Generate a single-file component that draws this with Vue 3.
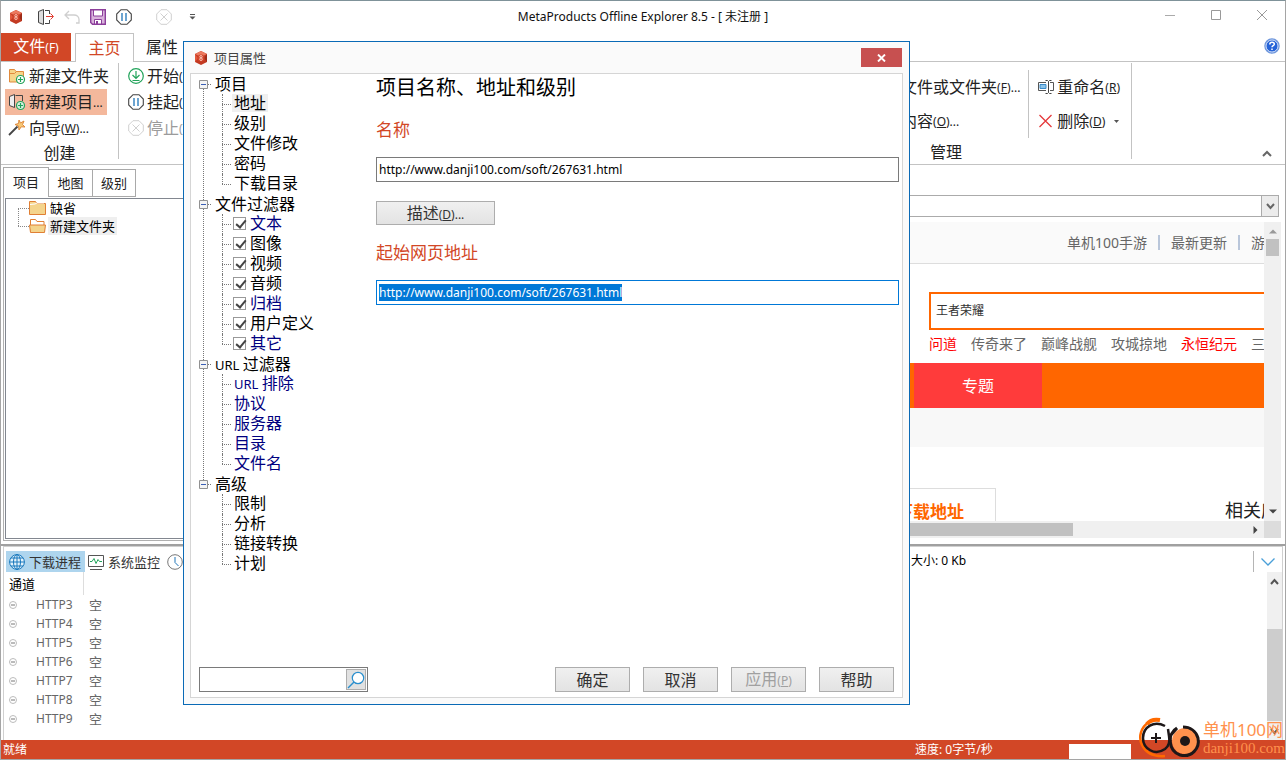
<script setup>
import { ref, onMounted } from 'vue'

const name = ref('http://www.danji100.com/soft/267631.html')
const address = ref('http://www.danji100.com/soft/267631.html')
const search = ref('')
const pageUrl = ref('')
const keyword = ref('王者荣耀')
const addressBox = ref(null)
const channels = ['HTTP3', 'HTTP4', 'HTTP5', 'HTTP6', 'HTTP7', 'HTTP8', 'HTTP9']
const groups = ref([
  {
    label: '项目',
    items: [
      { label: '地址', current: true },
      { label: '级别' },
      { label: '文件修改' },
      { label: '密码' },
      { label: '下载目录' }
    ]
  },
  {
    label: '文件过滤器',
    items: [
      { label: '文本', check: true, on: true, blue: true },
      { label: '图像', check: true, on: true },
      { label: '视频', check: true, on: true },
      { label: '音频', check: true, on: true },
      { label: '归档', check: true, on: true, blue: true },
      { label: '用户定义', check: true, on: true },
      { label: '其它', check: true, on: true, blue: true }
    ]
  },
  {
    prefix: 'URL',
    label: '过滤器',
    items: [
      { prefix: 'URL', label: '排除', blue: true },
      { label: '协议', blue: true },
      { label: '服务器', blue: true },
      { label: '目录', blue: true },
      { label: '文件名', blue: true }
    ]
  },
  {
    label: '高级',
    items: [{ label: '限制' }, { label: '分析' }, { label: '链接转换' }, { label: '计划' }]
  }
])
const hotLinks = [
  { label: '问道', hot: true },
  { label: '传奇来了' },
  { label: '巅峰战舰' },
  { label: '攻城掠地' },
  { label: '永恒纪元', hot: true },
  { label: '三' }
]

onMounted(() => {
  addressBox.value.focus()
  addressBox.value.select()
})
</script>

<template>
  <div class="window">
    <header class="titlebar">
      <div class="quick">
        <svg class="logo" width="14" height="16" viewBox="0 0 14 16">
          <path d="M7 1l6 3v8l-6 3-6-3V4z" fill="#c23a22" />
          <path d="M7 1l6 3-6 3-6-3z" fill="#ec7a5f" />
          <path d="M1 4l3 4-3 4z" fill="#e2583c" />
          <path d="M13 4l-3 4 3 4z" fill="#9c2c18" />
          <circle cx="7" cy="8" r="3.500" fill="#d2452b" />
          <circle cx="7" cy="6.700" r="1.200" fill="none" stroke="#ffd9cc" stroke-width=".8" />
          <circle cx="7" cy="9.200" r="1.300" fill="none" stroke="#ffd9cc" stroke-width=".8" />
        </svg>
        <button class="tool exit" aria-label="退出">
          <svg width="18" height="18" viewBox="0 0 18 18" fill="none">
            <path d="M1.500 3.500l5-2v15l-5-2z" fill="#ddd" stroke="#444" />
            <path d="M8 2.500h4.500V6M8 15.500h4.500V12" stroke="#444" />
            <path d="M9 8.500h7M13.500 5.500l3 3-3 3" stroke="#e03c31" />
          </svg>
        </button>
        <button class="tool undo" aria-label="撤消">
          <svg width="16" height="16" viewBox="0 0 16 16" fill="none" stroke="#cfcfcf" stroke-width="1.300">
            <path d="M5 2L1 6l4 4M1.500 6H10c3 0 5 2 5 4.500V14h-3" />
          </svg>
        </button>
        <button class="tool save" aria-label="保存">
          <svg width="16" height="16" viewBox="0 0 16 16" fill="none">
            <path d="M.7.7h14.600v14.600H2.500L.7 13.500z" fill="#d9b3dc" stroke="#8c3f9b" stroke-width="1.400" />
            <path d="M3.500 1h9v6h-9z" fill="#fff" stroke="#8c3f9b" />
            <path d="M4.500 10.500h7V15h-7z" fill="#fff" stroke="#8c3f9b" />
            <path d="M6 12h2v3H6z" fill="#8c3f9b" />
          </svg>
        </button>
        <button class="tool pause" aria-label="暂停">
          <svg width="16" height="16" viewBox="0 0 16 16" fill="none">
            <path d="M5 .7h6L15.300 5v6L11 15.300H5L.7 11V5z" stroke="#444" stroke-width="1.100" />
            <path d="M6 4v8M10 4v8" stroke="#1e74b8" stroke-width="1.300" />
          </svg>
        </button>
        <button class="tool stop" aria-label="停止" disabled>
          <svg width="16" height="16" viewBox="0 0 16 16" fill="none" stroke="#d0d0d0">
            <path d="M5 .7h6L15.300 5v6L11 15.300H5L.7 11V5z" />
            <path d="M4.500 4.500l7 7M11.500 4.500l-7 7" />
          </svg>
        </button>
        <button class="tool more" aria-label="自定义">
          <svg width="7" height="6" viewBox="0 0 7 6"><path d="M1 0h5v1H1zM.5 2.500h6l-3 3z" fill="#555" /></svg>
        </button>
      </div>
      <h1>MetaProducts Offline Explorer 8.5 - [ 未注册 ]</h1>
      <div class="sys">
        <button aria-label="最小化"><svg width="12" height="12" viewBox="0 0 12 12"><path d="M1 6.500h10" stroke="#aaa" /></svg></button>
        <button aria-label="最大化"><svg width="12" height="12" viewBox="0 0 12 12"><path d="M1.500 1.500h9v9h-9z" fill="none" stroke="#999" /></svg></button>
        <button aria-label="关闭"><svg width="12" height="12" viewBox="0 0 12 12"><path d="M1 1l10 10M11 1L1 11" stroke="#999" /></svg></button>
      </div>
    </header>

    <nav class="tabs">
      <button class="file">文件<small>(F)</small></button>
      <button class="tab active">主页</button>
      <button class="tab">属性</button>
      <button class="help" aria-label="帮助">
        <svg width="16" height="16" viewBox="0 0 16 16">
          <circle cx="8" cy="8" r="7" fill="#2563d8" stroke="#6f97dc" stroke-width="1.500" />
          <circle cx="8" cy="8" r="6" fill="none" stroke="#fff" stroke-width=".8" />
          <path d="M5.800 6.500c0-3 4.500-2.700 4.500-.3C10.300 7.700 8 7.700 8 9.300M8 10.500v1.600" fill="none" stroke="#fff" stroke-width="1.500" />
        </svg>
      </button>
    </nav>

    <section class="ribbon">
      <div class="group create">
        <button class="cmd">
          <svg width="18" height="18" viewBox="0 0 18 18" fill="none">
            <path d="M1.500 15V2.500h5L8 4.500h7.500V15z" fill="#f6d58a" stroke="#e08a3c" />
            <path d="M1.500 6.500h5l2-2" stroke="#e08a3c" />
            <circle cx="12.500" cy="12.500" r="4" fill="#fff" stroke="#21a35a" stroke-width="1.200" />
            <path d="M12.500 10v5M10 12.500h5" stroke="#21a35a" stroke-width="1.200" />
          </svg>新建文件夹
        </button>
        <button class="cmd lit">
          <svg width="18" height="18" viewBox="0 0 18 18" fill="none">
            <path d="M1.500 3.500l5-2v13l-5-2z" fill="#eee" stroke="#444" />
            <path d="M7.500 2.500h7V8" stroke="#444" />
            <circle cx="12.500" cy="12.500" r="4" fill="#d7efe0" stroke="#21a35a" stroke-width="1.200" />
            <path d="M12.500 10v5M10 12.500h5" stroke="#21a35a" stroke-width="1.200" />
          </svg>新建项目<small>...</small>
        </button>
        <button class="cmd">
          <svg width="18" height="18" viewBox="0 0 18 18" fill="none">
            <path d="M1 16l8.500-8.500" stroke="#444" stroke-width="1.800" />
            <path d="M11 1l1.500 3 3.500-2-1.500 3.500L17 8l-3.800-.2L11 11l-.5-4L7 5.500l3.500-1z" fill="#f6c877" stroke="#e08a3c" />
          </svg>向导<small>(<u>W</u>)...</small>
        </button>
        <span class="caption">创建</span>
      </div>
      <div class="group run">
        <button class="cmd">
          <svg width="16" height="16" viewBox="0 0 16 16" fill="none" stroke="#21a35a" stroke-width="1.200">
            <circle cx="8" cy="8" r="7.300" /><path d="M8 3v7M4.500 7L8 10.500 11.500 7M4.500 12.500h7" />
          </svg>开始<small>(<u>S</u>)</small>
        </button>
        <button class="cmd">
          <svg width="16" height="16" viewBox="0 0 16 16" fill="none">
            <path d="M5 .7h6L15.300 5v6L11 15.300H5L.7 11V5z" stroke="#444" stroke-width="1.100" />
            <path d="M6 4v8M10 4v8" stroke="#1e74b8" stroke-width="1.300" />
          </svg>挂起<small>(<u>U</u>)</small>
        </button>
        <button class="cmd off" disabled>
          <svg width="16" height="16" viewBox="0 0 16 16" fill="none" stroke="#d0d0d0">
            <path d="M5 .7h6L15.300 5v6L11 15.300H5L.7 11V5z" /><path d="M4.500 4.500l7 7M11.500 4.500l-7 7" />
          </svg>停止<small>(<u>T</u>)</small>
        </button>
      </div>
      <div class="group manage">
        <div class="pair">
          <button class="cmd">文件或文件夹<small>(<u>F</u>)...</small></button>
          <button class="cmd">内容<small>(<u>O</u>)...</small></button>
        </div>
        <div class="pair last">
          <button class="cmd">
            <svg width="18" height="16" viewBox="0 0 18 16" fill="none">
              <path d="M9 3.500H1.500v8H9M13 3.500h3.500v8H13" stroke="#555" />
              <path d="M3 5.500h6v4H3z" fill="#8cc4ea" stroke="#3a8ac8" />
              <path d="M8.500 1.500h2l1 1 1-1h2M8.500 14.500h2l1-1 1 1h2M11.500 2.500v11" stroke="#444" />
            </svg>重命名<small>(<u>R</u>)</small>
          </button>
          <button class="cmd">
            <svg width="18" height="16" viewBox="0 0 18 16"><path d="M2.500 2l12 12M14.500 2l-12 12" stroke="#e5393b" stroke-width="1.300" /></svg>删除<small>(<u>D</u>)</small>
            <svg class="drop" width="5" height="3" viewBox="0 0 5 3"><path d="M0 0h5L2.500 3z" fill="#555" /></svg>
          </button>
        </div>
        <span class="caption">管理</span>
      </div>
      <button class="fold" aria-label="折叠功能区">
        <svg width="10" height="7" viewBox="0 0 10 7"><path d="M1 6l4-4 4 4" fill="none" stroke="#666" stroke-width="2" /></svg>
      </button>
    </section>

    <main class="middle">
      <section class="projects">
        <div class="subtabs">
          <button class="on">项目</button><button>地图</button><button>级别</button>
        </div>
        <ul class="folders">
          <li>
            <svg width="17" height="14" viewBox="0 0 17 14"><path d="M.5 13.500V.5h6l1.500 2h8.500v11z" fill="#f4d48c" stroke="#e07f34" /><path d="M1 3.500l5-.5 2-1h7" fill="none" stroke="#fff" /></svg>
            <span>缺省</span>
          </li>
          <li class="sel">
            <svg width="17" height="14" viewBox="0 0 17 14"><path d="M1.500 13V.5h5l1.500 2h7V13" fill="#fff" stroke="#e07f34" /><path d="M.5 6h16l-1 7.500h-14z" fill="#f4d48c" stroke="#e07f34" /></svg>
            <span>新建文件夹</span>
          </li>
        </ul>
      </section>
      <section class="browser">
        <div class="urlbar">
          <input v-model="pageUrl" aria-label="网址" />
          <button aria-label="展开"><svg width="9" height="7" viewBox="0 0 9 7"><path d="M1 1l3.500 4L8 1" fill="none" stroke="#666" stroke-width="2" /></svg></button>
        </div>
        <div class="view">
          <div class="page">
            <div class="toplinks"><a href="#">单机100手游</a><i></i><a href="#">最新更新</a><i></i><a href="#">游</a></div>
            <div class="seek"><input v-model="keyword" aria-label="搜索游戏" /></div>
            <div class="hots"><a v-for="h in hotLinks" :key="h.label" href="#" :class="{ hot: h.hot }">{{ h.label }}</a></div>
            <div class="sitenav"><a href="#">专题</a></div>
            <div class="band"></div>
            <div class="lower"><strong>下载地址</strong><span>相关应</span></div>
          </div>
          <div class="vbar">
            <svg width="8" height="5" viewBox="0 0 8 5"><path d="M0 4.500h8L4 .5z" fill="#999" /></svg>
            <b></b>
            <svg width="8" height="5" viewBox="0 0 8 5"><path d="M0 .5h8l-4 4z" fill="#444" /></svg>
          </div>
          <div class="hbar"><b></b><svg width="5" height="8" viewBox="0 0 5 8"><path d="M.5 0v8l4-4z" fill="#444" /></svg></div>
          <div class="corner"></div>
        </div>
      </section>
    </main>

    <section class="queue">
      <div class="qtabs">
        <button class="on">
          <svg width="16" height="16" viewBox="0 0 16 16" fill="none" stroke="#1878bd">
            <circle cx="8" cy="8" r="7.400" fill="#e4f2fb" /><ellipse cx="8" cy="8" rx="3.500" ry="7.400" /><path d="M8 .5v15M.5 8h15M2 4h12M2 12h12" />
          </svg>下载进程
        </button>
        <button>
          <svg width="16" height="16" viewBox="0 0 16 16" fill="none">
            <path d="M.5 1.500h15v11H.5z" stroke="#555" /><path d="M2 15.500h12" stroke="#555" /><path d="M2 7.500h2l2-3 2 5 2-4 1.500 2H14" stroke="#21a35a" />
          </svg>系统监控
        </button>
        <button aria-label="计划">
          <svg width="16" height="16" viewBox="0 0 16 16" fill="none"><circle cx="8" cy="8" r="7.300" stroke="#777" /><path d="M8 3v5.500l3.500 3.500" stroke="#1e74b8" /></svg>
        </button>
        <span class="size">大小: 0 Kb</span>
        <button class="down" aria-label="收起"><svg width="14" height="8" viewBox="0 0 14 8"><path d="M.5.5L7 7l6.500-6.500" fill="none" stroke="#4a9fd8" stroke-width="1.300" /></svg></button>
      </div>
      <div class="qbody">
        <table>
          <thead><tr><th colspan="2">通道</th><th></th></tr></thead>
          <tbody>
            <tr v-for="c in channels" :key="c">
              <td class="st"><svg width="8" height="8" viewBox="0 0 8 8" fill="none"><circle cx="4" cy="4" r="3.500" stroke="#bbb" /><path d="M2 4h4" stroke="#777" /></svg></td>
              <td class="ch">{{ c }}</td>
              <td>空</td>
            </tr>
          </tbody>
        </table>
        <div class="qbar">
          <svg width="9" height="7" viewBox="0 0 9 7"><path d="M1 6l3.500-4L8 6" fill="none" stroke="#555" stroke-width="2" /></svg>
          <b></b>
          <svg width="9" height="7" viewBox="0 0 9 7"><path d="M1 1l3.500 4L8 1" fill="none" stroke="#555" stroke-width="2" /></svg>
        </div>
      </div>
    </section>

    <footer class="status"><span class="ready">就绪</span><span>速度: 0字节/秒</span><i></i></footer>

    <div class="brand">
      <svg width="64" height="42" viewBox="0 0 64 42" fill="none">
        <path d="M11 5C3 10 0 20 4 28c4 8 12 12 23 11" stroke="#ff6a00" stroke-width="2.500" />
        <path d="M9 7c3-4 7-5 13-4" stroke="#ff6a00" stroke-width="4" />
        <path d="M27 9C16 3 5 10 5 21s12 18 22 11c4-3 5-8 4-13l-1-7" stroke="#1d1718" stroke-width="2.500" />
        <path d="M18 16v10M13 21h10" stroke="#1d1718" stroke-width="2" />
        <circle cx="47" cy="24" r="13" fill="#ff914d" />
        <path d="M39 11C29 16 30 34 42 38c12 3 20-7 18-17-2-7-8-11-15-11M32 19l7-8" stroke="#1d1718" stroke-width="3" />
        <circle cx="47" cy="24" r="5" fill="#1d1718" />
      </svg>
      <p><span>单机100网</span><em>danji100.com</em></p>
    </div>

    <div class="dialog" role="dialog" aria-labelledby="dlg-title">
      <header>
        <svg width="14" height="16" viewBox="0 0 14 16">
          <path d="M7 1l6 3v8l-6 3-6-3V4z" fill="#c23a22" />
          <path d="M7 1l6 3-6 3-6-3z" fill="#ec7a5f" />
          <path d="M1 4l3 4-3 4z" fill="#e2583c" />
          <path d="M13 4l-3 4 3 4z" fill="#9c2c18" />
          <circle cx="7" cy="8" r="3.500" fill="#d2452b" />
          <circle cx="7" cy="6.700" r="1.200" fill="none" stroke="#ffd9cc" stroke-width=".8" />
          <circle cx="7" cy="9.200" r="1.300" fill="none" stroke="#ffd9cc" stroke-width=".8" />
        </svg>
        <h2 id="dlg-title">项目属性</h2>
        <button class="close" aria-label="关闭"><svg width="9" height="8" viewBox="0 0 9 8"><path d="M1 .5l7 7M8 .5l-7 7" stroke="#fff" stroke-width="1.900" /></svg></button>
      </header>
      <div class="body">
        <div class="cols">
          <ul class="tree">
            <li v-for="g in groups" :key="g.label" class="node">
              <div class="head"><svg width="9" height="9" viewBox="0 0 9 9"><path d="M.5.5h8v8h-8z" fill="#f4f4f4" stroke="#919191" /><path d="M2 4.500h5" stroke="#3b5fb5" /></svg><i></i><span><small v-if="g.prefix">{{ g.prefix }}&nbsp;</small>{{ g.label }}</span></div>
              <ul>
                <li v-for="t in g.items" :key="t.label" :class="{ blue: t.blue, current: t.current }">
                  <label v-if="t.check"><input v-model="t.on" type="checkbox" />{{ t.label }}</label>
                  <span v-else><small v-if="t.prefix">{{ t.prefix }}&nbsp;</small>{{ t.label }}</span>
                </li>
              </ul>
            </li>
          </ul>
          <form class="form" @submit.prevent>
            <h3>项目名称、地址和级别</h3>
            <label for="f-name">名称</label>
            <input id="f-name" v-model="name" type="text" />
            <button type="button" class="btn wide">描述<small>(<u>D</u>)...</small></button>
            <label for="f-url">起始网页地址</label>
            <input id="f-url" ref="addressBox" v-model="address" type="text" />
          </form>
        </div>
        <div class="foot">
          <div class="find">
            <input v-model="search" aria-label="查找" />
            <button aria-label="查找">
              <svg width="18" height="18" viewBox="0 0 18 18" fill="none" stroke="#2a8fce"><circle cx="11" cy="7" r="5.700" fill="#fff" stroke-width="1.200" /><path d="M7 11l-6 6" stroke-width="1.500" /></svg>
            </button>
          </div>
          <button class="btn main">确定</button>
          <button class="btn">取消</button>
          <button class="btn" disabled>应用<small>(<u>P</u>)</small></button>
          <button class="btn">帮助</button>
        </div>
      </div>
    </div>
  </div>
</template>

<style>
body { background: #fff; }
</style>

<style scoped>
* { box-sizing: border-box; }
.window {
  position: relative;
  display: flex;
  flex-direction: column;
  min-height: 100vh;
  overflow: hidden;
  border: 1px solid #a5a5a5;
  border-top-color: #7f9299;
  background: #fff;
  color: #222;
  font-family: "Noto Sans", "Noto Sans CJK SC", sans-serif;
  font-size: 13px;
  line-height: 18px;
}
button, input { font: inherit; color: inherit; }
button { padding: 0; border: 0; background: none; white-space: nowrap; }
svg { display: block; flex: none; }
ul { margin: 0; padding: 0; list-style: none; }
a { color: inherit; text-decoration: none; }
h1, h2, h3 { margin: 0; font-weight: 400; }
small { font-size: 12px; }

.titlebar { display: grid; grid-template-columns: 1fr auto 1fr; align-items: center; height: 32px; }
.titlebar h1 { font-size: 12px; color: #111; }
.quick { display: flex; align-items: center; padding-left: 8px; }
.exit { margin-left: 14px; }
.undo { margin-left: 9px; }
.save { margin-left: 10px; }
.pause { margin-left: 10px; }
.stop { margin-left: 24px; }
.more { margin-left: 17px; }
.sys { display: flex; justify-content: flex-end; gap: 34px; padding: 0 17px 4px 0; }

.tabs { display: flex; height: 29px; border-bottom: 1px solid #c3c3c3; font-size: 16px; }
.file { width: 70px; background: #d24726; color: #fff; }
.tab { padding: 0 12px; }
.tab.active { margin: 0 0 -1px 4px; width: 59px; border: 1px solid #c3c3c3; border-bottom: 0; background: #fff; color: #d24726; }
.help { margin-left: auto; padding: 0 5px 2px 0; }

.ribbon { display: flex; height: 103px; border-bottom: 1px solid #c3c3c3; }
.group { display: flex; flex-direction: column; align-items: flex-start; flex: none; }
.cmd { display: flex; flex: none; align-items: center; height: 26px; font-size: 16px; }
.cmd svg { margin-right: 3px; }
.cmd small { padding-top: 2px; }
.cmd.off { color: #9b9b9b; }
.caption { flex: none; align-self: center; height: 24px; font-size: 16px; line-height: 24px; }
.create { width: 118px; margin: 1px 0 5px; padding-left: 4px; border-right: 1px solid #c3c3c3; }
.create .cmd { padding: 0 4px 0 3px; }
.create .cmd.lit { background: #f4b89c; }
.create .caption { padding-right: 4px; }
.run { width: 643px; padding: 1px 0 0 9px; }
.manage { display: grid; grid-template-columns: auto auto; width: 370px; margin: 1px 0 5px; padding: 7px 0 0 139px; align-content: start; justify-content: start; border-right: 1px solid #c3c3c3; }
.pair { display: grid; gap: 8px; height: 68px; padding-right: 8px; align-content: center; }
.pair.last { padding: 0 0 0 8px; border-left: 1px solid #c3c3c3; }
.pair .cmd svg { margin-right: 2px; }
.pair .cmd .drop { margin-left: 9px; }
.manage .caption { justify-self: start; padding: 4px 0 0 29px; line-height: 20px; }
.fold { align-self: flex-end; margin-left: auto; padding: 0 13px 7px 0; }

.middle { display: flex; flex: 1; min-height: 379px; border-bottom: 2px solid #a0a0a0; }
.projects { display: flex; flex-direction: column; flex: none; width: 220px; margin: 2px 0 3px 2px; border-left: 1px solid #b0b0b0; border-bottom: 1px solid #b0b0b0; }
.subtabs { display: flex; align-items: flex-end; height: 30px; margin-left: -1px; }
.subtabs button { width: 44px; height: 28px; border: 1px solid #a9a9a9; border-left: 0; }
.subtabs button:last-child { width: 43px; }
.subtabs .on { width: 46px; height: 30px; padding-bottom: 2px; border-left: 1px solid #a9a9a9; border-bottom: 0; }
.folders { flex: 1; margin: 1px 0 1px 1px; border: 1px solid #828790; color: #000; }
.folders li { position: relative; display: flex; align-items: center; gap: 2px; height: 18px; padding-left: 23px; }
.folders li::before { content: ""; position: absolute; left: 12px; top: 9px; width: 11px; border-top: 1px dotted #888; }
.folders .sel::after { content: ""; position: absolute; left: 12px; top: -9px; height: 18px; border-left: 1px dotted #888; }
.folders span { padding: 0 2px; line-height: 18px; }
.sel span { background: #efefef; }

.browser { display: flex; flex-direction: column; flex: 1; min-width: 0; padding: 30px 4px 6px 0; }
.urlbar { display: flex; height: 22px; margin-right: 2px; border: 1px solid #ababab; }
.urlbar input { flex: 1; border: 0; outline: 0; }
.urlbar button { display: flex; align-items: center; justify-content: center; width: 17px; border-left: 1px solid #ababab; background: #ececec; }
.view { display: grid; grid-template: 1fr 17px / 1fr 17px; flex: 1; margin-top: 5px; min-height: 0; }
.page { height: 299px; overflow: hidden; color: #666; font-size: 14px; }
.toplinks { display: flex; align-items: center; height: 42px; padding-left: 844px; border-bottom: 1px solid #ddd; background: #fafafa; white-space: nowrap; }
.toplinks a { flex: none; }
.toplinks i { flex: none; width: 2px; height: 15px; margin: 0 11px; background: #b9c6da; }
.seek { display: flex; height: 38px; margin: 28px -120px 0 706px; border: 2px solid #f60; }
.seek input { flex: 1; min-width: 0; padding: 0 5px; border: 0; outline: 0; color: #333; font-size: 12px; }
.hots { display: flex; gap: 14px; height: 33px; padding-left: 706px; line-height: 28px; white-space: nowrap; }
.hot { color: #f00; }
.sitenav { display: flex; height: 45px; padding-left: 691px; background: #f60; }
.sitenav a { width: 128px; background: #ff3b3b; color: #fff; font-size: 16px; line-height: 46px; text-align: center; }
.band { height: 39px; background: #f8f8f8; }
.lower { display: flex; margin-top: 41px; white-space: nowrap; }
.lower strong { flex: none; width: 773px; height: 40px; padding-left: 672px; border: 1px solid #ddd; color: #f60; font-size: 17px; line-height: 46px; }
.lower span { flex: none; margin-left: 229px; color: #222; font-size: 18px; line-height: 44px; }
.vbar { display: flex; flex-direction: column; align-items: center; padding: 7px 0; background: #f0f0f0; }
.vbar b { width: 13px; height: 17px; margin: 5px 0 auto; background: #c1c1c1; }
.hbar { display: flex; align-items: center; padding-right: 6px; background: #f0f0f0; }
.hbar b { width: 850px; height: 13px; margin-right: auto; background: #c1c1c1; }
.corner { background: #dcdcdc; }

.queue { display: flex; flex-direction: column; height: 194px; margin: 0 2px; border: 1px solid #d0d0d0; border-bottom: 0; }
.qtabs { display: flex; height: 25px; padding: 4px 0 0 2px; color: #333; line-height: 20px; }
.qtabs button { display: flex; align-items: center; gap: 4px; padding: 0 4px 0 3px; }
.qtabs .on { background: #aed5ee; }
.size { margin-left: 724px; color: #000; font-size: 12px; line-height: 20px; }
.qtabs .down { margin-left: auto; padding: 0 7px; border-left: 1px solid #b5b5b5; }
.qbody { display: flex; flex: 1; min-height: 0; }
table { border-collapse: collapse; align-self: flex-start; margin-right: auto; color: #666; }
th { height: 23px; padding: 0 0 0 5px; border-right: 1px solid #ddd; color: #000; font-weight: 400; text-align: left; line-height: 20px; }
th + th { border: 0; }
td { height: 19px; padding: 0 0 0 6px; }
.st { width: 32px; padding-left: 5px; }
.ch { width: 47px; padding: 0; font-size: 12px; }
.qbar { display: flex; flex-direction: column; align-items: center; width: 15px; padding: 6px 0 5px; background: #f0f0f0; }
.qbar b { width: 15px; height: 92px; margin: auto 0 7px; background: #cdcdcd; }

.status { display: flex; align-items: center; height: 19px; padding-left: 2px; background: #d24726; color: #fff; font-size: 12px; }
.ready { width: 912px; }
.status i { width: 62px; height: 15px; margin: 4px 154px 0 auto; background: #fff; }

.brand { position: absolute; right: 0; bottom: 0; display: flex; gap: 1px; color: #ff914d; }
.brand p { margin: 3px 0 0; }
.brand span { display: block; font-size: 17px; line-height: 20px; white-space: nowrap; }
.brand em { display: block; font: 15px/16px "Liberation Serif", serif; }

.dialog { position: absolute; left: 182px; top: 40px; display: flex; flex-direction: column; width: 727px; height: 664px; padding: 0 6px 6px; border: 1px solid #0a6ab6; background: #fafafa; color: #000; }
.dialog header { display: flex; align-items: center; height: 31px; padding-left: 4px; }
.dialog h2 { margin: 0 auto 0 6px; color: #444; font-size: 13px; }
.close { display: flex; align-items: center; justify-content: center; width: 41px; height: 19px; margin-right: 1px; background: #c75050; }
.body { display: flex; flex-direction: column; flex: 1; border: 1px solid #d5d5d5; background: #fff; }
.cols { display: flex; flex: 1; }
.tree { width: 185px; font-size: 16px; line-height: 20px; }
.tree small { font-size: 13px; }
.node { position: relative; }
.node:not(:last-child)::before { content: ""; position: absolute; left: 12px; top: 15px; bottom: -6px; border-left: 1px dotted #777; }
.head { display: flex; align-items: center; height: 20px; padding-left: 8px; line-height: 18px; }
.head i { width: 3px; margin-right: 4px; border-top: 1px dotted #777; }
.node ul { padding-left: 31px; }
.node ul li { position: relative; height: 20px; padding-left: 11px; line-height: 18px; }
.node ul li::before { content: ""; position: absolute; left: 0; top: 0; height: 20px; border-left: 1px dotted #777; }
.node ul li:last-child::before { height: 10px; }
.node ul li::after { content: ""; position: absolute; left: 0; top: 10px; width: 9px; border-top: 1px dotted #777; }
.node label { display: flex; align-items: center; gap: 4px; }
.node li span { display: inline-block; margin-left: -1px; padding: 0 2px; }
.blue { color: #000080; }
.current span { background: #f0f0f0; }
.node input { appearance: none; width: 13px; height: 13px; margin: 0; border: 1px solid #999; background: #fff; }
.node input:checked::after { content: ""; display: block; width: 4px; height: 8px; margin: 0 0 0 4px; border: solid #444; border-width: 0 2px 2px 0; transform: rotate(40deg); }
.form { display: flex; flex-direction: column; flex: 1; padding-right: 3px; }
.form h3 { font-size: 20px; line-height: 28px; }
.form label { margin: 15px 0; color: #d24726; font-size: 17px; line-height: 25px; }
.form input { height: 25px; padding: 0 2px; border: 1px solid #7a7a7a; outline: 0; font-size: 12px; }
.form input:focus { border-color: #0078d7; }
.form input::selection { background: #0078d7; color: #fff; }
.btn { width: 75px; height: 25px; border: 1px solid #adadad; background: linear-gradient(#f0f0f0, #e3e3e3); color: #333; font-size: 16px; line-height: 22px; }
.btn:disabled { color: #a0a0a0; }
.btn.wide { width: 119px; height: 24px; margin-top: 19px; }
.foot { display: flex; align-items: center; gap: 13px; padding: 0 8px 5px; }
.find { display: flex; width: 169px; height: 25px; margin-right: auto; padding: 1px; border: 1px solid #7a7a7a; }
.find input { flex: 1; min-width: 0; border: 0; outline: 0; }
.find button { display: flex; align-items: center; justify-content: center; width: 20px; border: 1px solid #adadad; background: #e1e1e1; }
</style>
